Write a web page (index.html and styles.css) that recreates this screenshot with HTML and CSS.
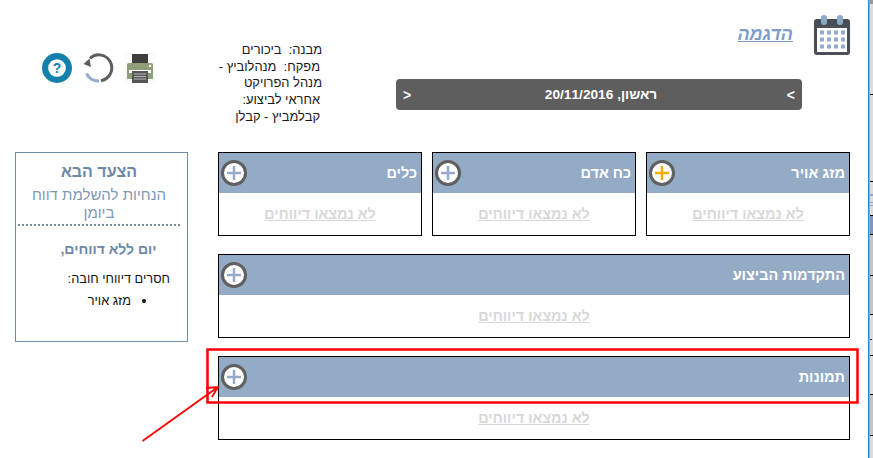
FILE: index.html
```html
<!DOCTYPE html>
<html lang="he" dir="rtl">
<head>
<meta charset="utf-8">
<title>הדגמה</title>
<link rel="stylesheet" href="styles.css">
</head>
<body>
<div class="page">
  <svg class="strip" width="4" height="458" viewBox="0 0 4 458">
    <rect width="4" height="458" fill="#dcdcdc"/>
    <rect y="0" width="4" height="4" fill="#9a9a9a"/>
    <rect y="94" width="4" height="1" fill="#000"/>
    <rect y="181" width="4" height="1" fill="#000"/>
    <rect y="194" width="4" height="2" fill="#8fa8c8"/>
    <rect y="202" width="4" height="1" fill="#8fa8c8"/>
    <rect y="205" width="4" height="1" fill="#8fa8c8"/>
    <rect y="215" width="4" height="1" fill="#000"/>
    <rect y="216" width="4" height="18" fill="#8098b8"/>
    <rect y="234" width="4" height="1" fill="#000"/>
    <rect y="235" width="4" height="40" fill="#c4c4c4"/>
    <rect y="275" width="4" height="1" fill="#000"/>
    <rect y="276" width="4" height="38" fill="#c4c4c4"/>
    <rect y="314" width="4" height="1" fill="#000"/>
    <rect y="339" width="3" height="1" fill="#402040"/>
    <rect y="340" width="1" height="6" fill="#5030a0"/>
    <rect y="355" width="4" height="1" fill="#000"/>
    <rect y="394" width="4" height="1" fill="#000"/>
    <rect y="395" width="4" height="40" fill="#c4c4c4"/>
    <rect y="435" width="4" height="1" fill="#000"/>
  </svg>
  <div class="edge"></div>
  <main class="main">
    <header class="top">
      <svg class="calendar" width="36" height="41" viewBox="0 0 36 41">
        <rect x="0" y="4" width="36" height="36" rx="3" fill="#4a4f57"/>
        <rect x="3" y="13" width="30" height="24" fill="#fff"/>
        <rect x="7" y="0" width="6" height="10" rx="3" fill="#8fa9c9"/>
        <rect x="23" y="0" width="6" height="10" rx="3" fill="#8fa9c9"/>
        <g fill="#94abc9">
          <rect x="6" y="15.500" width="4" height="4"/><rect x="13" y="15.500" width="4" height="4"/><rect x="20" y="15.500" width="4" height="4"/><rect x="27" y="15.500" width="4" height="4"/>
          <rect x="6" y="22.500" width="4" height="4"/><rect x="13" y="22.500" width="4" height="4"/><rect x="20" y="22.500" width="4" height="4"/><rect x="27" y="22.500" width="4" height="4"/>
          <rect x="6" y="29.500" width="4" height="4"/><rect x="13" y="29.500" width="4" height="4"/><rect x="20" y="29.500" width="4" height="4"/><rect x="27" y="29.500" width="4" height="4"/>
        </g>
      </svg>
      <div class="date-col">
        <a class="site-title">הדגמה</a>
        <div class="date-bar">
          <span class="arrow">&lt;</span>
          <span class="date">ראשון, 20/11/2016</span>
          <span class="arrow">&gt;</span>
        </div>
      </div>
      <div class="info">
        <div>מבנה:&nbsp; ביכורים</div>
        <div class="inset">מפקח:&nbsp; מנהלוביץ -</div>
        <div>מנהל הפרויקט</div>
        <div class="inset">אחראי לביצוע:</div>
        <div class="inset">קבלמביץ - קבלן</div>
      </div>
      <div class="tools">
        <svg width="30" height="30" viewBox="0 0 30 30">
          <rect x="0" y="0" width="30" height="30" fill="#fbfbfb"/>
          <rect x="7" y="1" width="16" height="9" fill="#3f3f3f"/>
          <path d="M4 10h22a2 2 0 0 1 2 2v14h-26v-14a2 2 0 0 1 2-2z" fill="#8d9e78"/>
          <circle cx="25" cy="13" r="1.300" fill="#fff"/>
          <rect x="4" y="17" width="22" height="3" fill="#fff"/>
          <rect x="7" y="18" width="16" height="12" fill="#555"/>
          <path d="M9 21h12M9 23.500h12M9 26h12" stroke="#bbb" stroke-width="1"/>
        </svg>
        <svg class="refresh" width="32" height="32" viewBox="0 0 32 32" fill="none">
          <path d="M8 6.300A13 13 0 1 1 19 28.700" stroke="#5e5e5e" stroke-width="3"/>
          <path d="M4.500 21.500A13 13 0 0 0 17 29" stroke="#94abc9" stroke-width="3"/>
          <path d="M1.500 12L7.500 6.500L9 15z" fill="#5e5e5e"/>
        </svg>
        <svg width="32" height="32" viewBox="0 0 32 32">
          <circle cx="16" cy="16" r="15" fill="#1680ad"/>
          <circle cx="16" cy="16" r="8.800" fill="#fff"/>
          <text x="16" y="21" class="qmark" text-anchor="middle">?</text>
        </svg>
      </div>
    </header>
    <div class="body">
      <div class="content">
        <div class="row">
          <section class="card">
            <div class="card-head"><h2>מזג אויר</h2>
              <svg class="plus" width="28" height="28" viewBox="0 0 28 28"><circle cx="14" cy="14" r="11.500" fill="#fff" stroke="#5f5f5f" stroke-width="3"/><path d="M14 7v14M7 14h14" stroke="#f4ab05" stroke-width="2.500"/></svg>
            </div>
            <div class="card-body"><a>לא נמצאו דיווחים</a></div>
          </section>
          <section class="card">
            <div class="card-head"><h2>כח אדם</h2>
              <svg class="plus" width="28" height="28" viewBox="0 0 28 28"><circle cx="14" cy="14" r="11.500" fill="#fff" stroke="#5f5f5f" stroke-width="3"/><path d="M14 7v14M7 14h14" stroke="#94abc9" stroke-width="2.500"/></svg>
            </div>
            <div class="card-body"><a>לא נמצאו דיווחים</a></div>
          </section>
          <section class="card">
            <div class="card-head"><h2>כלים</h2>
              <svg class="plus" width="28" height="28" viewBox="0 0 28 28"><circle cx="14" cy="14" r="11.500" fill="#fff" stroke="#5f5f5f" stroke-width="3"/><path d="M14 7v14M7 14h14" stroke="#94abc9" stroke-width="2.500"/></svg>
            </div>
            <div class="card-body"><a>לא נמצאו דיווחים</a></div>
          </section>
        </div>
        <section class="card">
          <div class="card-head"><h2>התקדמות הביצוע</h2>
            <svg class="plus" width="28" height="28" viewBox="0 0 28 28"><circle cx="14" cy="14" r="11.500" fill="#fff" stroke="#5f5f5f" stroke-width="3"/><path d="M14 7v14M7 14h14" stroke="#94abc9" stroke-width="2.500"/></svg>
          </div>
          <div class="card-body"><a>לא נמצאו דיווחים</a></div>
        </section>
        <section class="card">
          <div class="card-head"><h2>תמונות</h2>
            <svg class="plus" width="28" height="28" viewBox="0 0 28 28"><circle cx="14" cy="14" r="11.500" fill="#fff" stroke="#5f5f5f" stroke-width="3"/><path d="M14 7v14M7 14h14" stroke="#94abc9" stroke-width="2.500"/></svg>
          </div>
          <div class="card-body"><a>לא נמצאו דיווחים</a></div>
        </section>
      </div>
      <aside class="next">
        <h3>הצעד הבא</h3>
        <p class="hint">הנחיות להשלמת דווח ביומן</p>
        <h3 class="day">יום ללא דווחים,</h3>
        <p class="missing">חסרים דיווחי חובה:</p>
        <ul><li>מזג אויר</li></ul>
      </aside>
    </div>
  </main>
</div>
<svg class="markup" width="873" height="458" viewBox="0 0 873 458" fill="none">
  <rect x="207.500" y="349.500" width="650" height="53" stroke="#f00" stroke-width="2.500"/>
  <path d="M142.500 441L218 387M206 388L218 387L212 397" stroke="#f00" stroke-width="1.800"/>
</svg>
</body>
</html>
```

FILE: styles.css
```css
* { box-sizing: border-box; }
html, body { margin: 0; padding: 0; height: 458px; overflow: hidden; background: #fff; }
body { position: relative; font-family: "Liberation Sans", Arial, sans-serif; font-size: 14px; color: #111; }

.page { display: flex; height: 458px; }
.strip { flex: none; display: block; }
.edge { flex: none; width: 1px; background: #2f86cf; box-shadow: 1px 0 0 #7fb2dc; }
.main { flex: 1; padding-right: 18px; padding-left: 15px; }

.top { display: flex; height: 152px; align-items: flex-start; }
.calendar { flex: none; margin-top: 15px; margin-left: 12px; }
.date-col { flex: none; width: 406px; margin-left: 74px; }
.site-title { display: block; margin-top: 25px; padding-right: 9px; height: 54px; font-size: 18px; line-height: 18px; font-weight: bold; font-style: italic; color: #7f9cc8; text-decoration: underline; }
.date-bar { display: flex; justify-content: space-between; align-items: center; height: 31px; padding: 0 7px; background: #5e5e5e; border-radius: 4px; color: #fff; font-size: 14px; font-weight: bold; }
.arrow { direction: ltr; unicode-bidi: bidi-override; }
.date { margin-left: 4px; font-size: 13.700px; }

.info { flex: none; width: 104px; margin-top: 42px; font-size: 12.900px; line-height: 16.700px; white-space: nowrap; color: #1a1a1a; }
.inset { padding-right: 2px; }

.tools { flex: 1; display: flex; align-items: center; margin-top: 52px; padding-right: 63px; }
.tools svg { flex: none; display: block; }
.tools .refresh { margin-right: 11px; margin-left: 9px; }
.qmark { font-family: "Liberation Sans", Arial, sans-serif; font-size: 14px; font-weight: bold; fill: #1680ad; }

.body { display: flex; gap: 30px; align-items: flex-start; }
.content { width: 632px; flex: none; display: flex; flex-direction: column; gap: 18px; }
.row { display: flex; gap: 10px; }
.row .card { flex: 1; }

.card { height: 84px; border: 1px solid #000; background: #fff; }
.card-head { display: flex; justify-content: space-between; align-items: center; height: 40px; padding: 0 4px 0 1px; background: #94abc6; }
.card-head h2 { margin: 0; font-size: 14.500px; font-weight: bold; color: #fff; }
.plus { display: block; flex: none; }
.card-body { display: flex; justify-content: center; align-items: center; height: 42px; }
.card-body a { font-size: 14.400px; font-weight: bold; color: #d8d8d8; text-decoration: underline; }

.next { width: 173px; height: 190px; flex: none; border: 1px solid #6f8cab; padding: 9px 7px 0 2px; text-align: center; }
.next h3 { margin: 0; font-size: 16px; line-height: 20px; font-weight: bold; color: #6e88a6; }
.hint { margin: 4px 0 0; padding: 0 8px 2px; font-size: 15px; line-height: 18px; color: #7f98b5; border-bottom: 2px dotted #6f8cab; }
.next .day { margin-top: 13px; padding-left: 19px; font-size: 14px; }
.missing { margin: 11px 0 0; padding-right: 10px; text-align: right; font-size: 12.800px; line-height: 18px; color: #111; }
.next ul { margin: 4px 0 0; padding: 0 49px 0 0; text-align: right; font-size: 12.800px; line-height: 18px; }

.markup { position: absolute; left: 0; top: 0; pointer-events: none; }
```
